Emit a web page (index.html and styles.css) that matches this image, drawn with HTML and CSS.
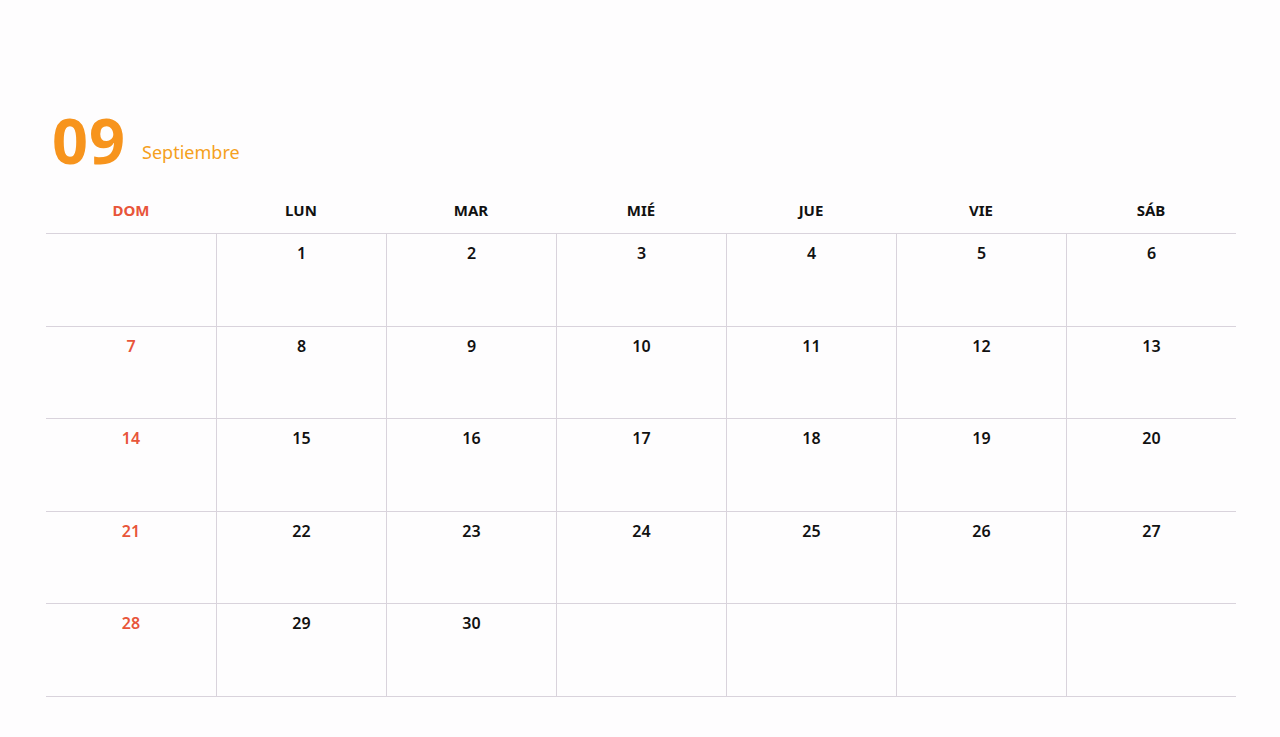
FILE: index.html
```html
<!DOCTYPE html>
<html lang="es">
<head>
<meta charset="utf-8">
<title>Septiembre</title>
<link rel="stylesheet" href="styles.css">
</head>
<body>
<main class="page">
  <header class="title">
    <span class="month-num">09</span>
    <span class="month-name">Septiembre</span>
  </header>
  <div class="weekdays">
    <div class="wd sun">DOM</div>
    <div class="wd">LUN</div>
    <div class="wd">MAR</div>
    <div class="wd">MIÉ</div>
    <div class="wd">JUE</div>
    <div class="wd">VIE</div>
    <div class="wd">SÁB</div>
  </div>
  <div class="grid">
    <div class="cell sun"></div>
    <div class="cell">1</div>
    <div class="cell">2</div>
    <div class="cell">3</div>
    <div class="cell">4</div>
    <div class="cell">5</div>
    <div class="cell">6</div>
    <div class="cell sun">7</div>
    <div class="cell">8</div>
    <div class="cell">9</div>
    <div class="cell">10</div>
    <div class="cell">11</div>
    <div class="cell">12</div>
    <div class="cell">13</div>
    <div class="cell sun">14</div>
    <div class="cell">15</div>
    <div class="cell">16</div>
    <div class="cell">17</div>
    <div class="cell">18</div>
    <div class="cell">19</div>
    <div class="cell">20</div>
    <div class="cell sun">21</div>
    <div class="cell">22</div>
    <div class="cell">23</div>
    <div class="cell">24</div>
    <div class="cell">25</div>
    <div class="cell">26</div>
    <div class="cell">27</div>
    <div class="cell sun">28</div>
    <div class="cell">29</div>
    <div class="cell">30</div>
    <div class="cell"></div>
    <div class="cell"></div>
    <div class="cell"></div>
    <div class="cell"></div>
  </div>
</main>
</body>
</html>
```
FILE: styles.css
```css
html, body {
  margin: 0;
  padding: 0;
  background: #fefdfe;
}
body {
  font-family: "Noto Sans", "DejaVu Sans", sans-serif;
  color: #111;
}
.page {
  width: 1190px;
  margin-left: 46px;
  padding-top: 109px;
}
.title {
  display: flex;
  align-items: flex-end;
  gap: 16px;
  padding-left: 6px;
  height: 80px;
}
.month-num {
  font-size: 63px;
  line-height: 1;
  font-weight: 700;
  color: #f7941d;
  letter-spacing: 1px;
  margin-bottom: 18px;
}
.month-name {
  font-size: 18px;
  line-height: 1;
  color: #f5a020;
  margin-bottom: 28px;
}
.weekdays {
  display: grid;
  grid-template-columns: repeat(7, 1fr);
  height: 44px;
}
.wd {
  text-align: center;
  font-size: 15px;
  font-weight: 700;
  line-height: 42px;
  color: #111;
}
.wd.sun { color: #e8553a; }
.grid {
  display: grid;
  grid-template-columns: repeat(7, 1fr);
  grid-template-rows: repeat(5, 92.6px);
  border-bottom: 1px solid #d9d3dc;
}
.cell {
  border-top: 1px solid #d9d3dc;
  border-left: 1px solid #d9d3dc;
  text-align: center;
  font-size: 16px;
  font-weight: 600;
  padding-top: 8px;
  box-sizing: border-box;
}
.cell:nth-child(7n+1) { border-left: none; }
.cell.sun { color: #e8553a; }
```
